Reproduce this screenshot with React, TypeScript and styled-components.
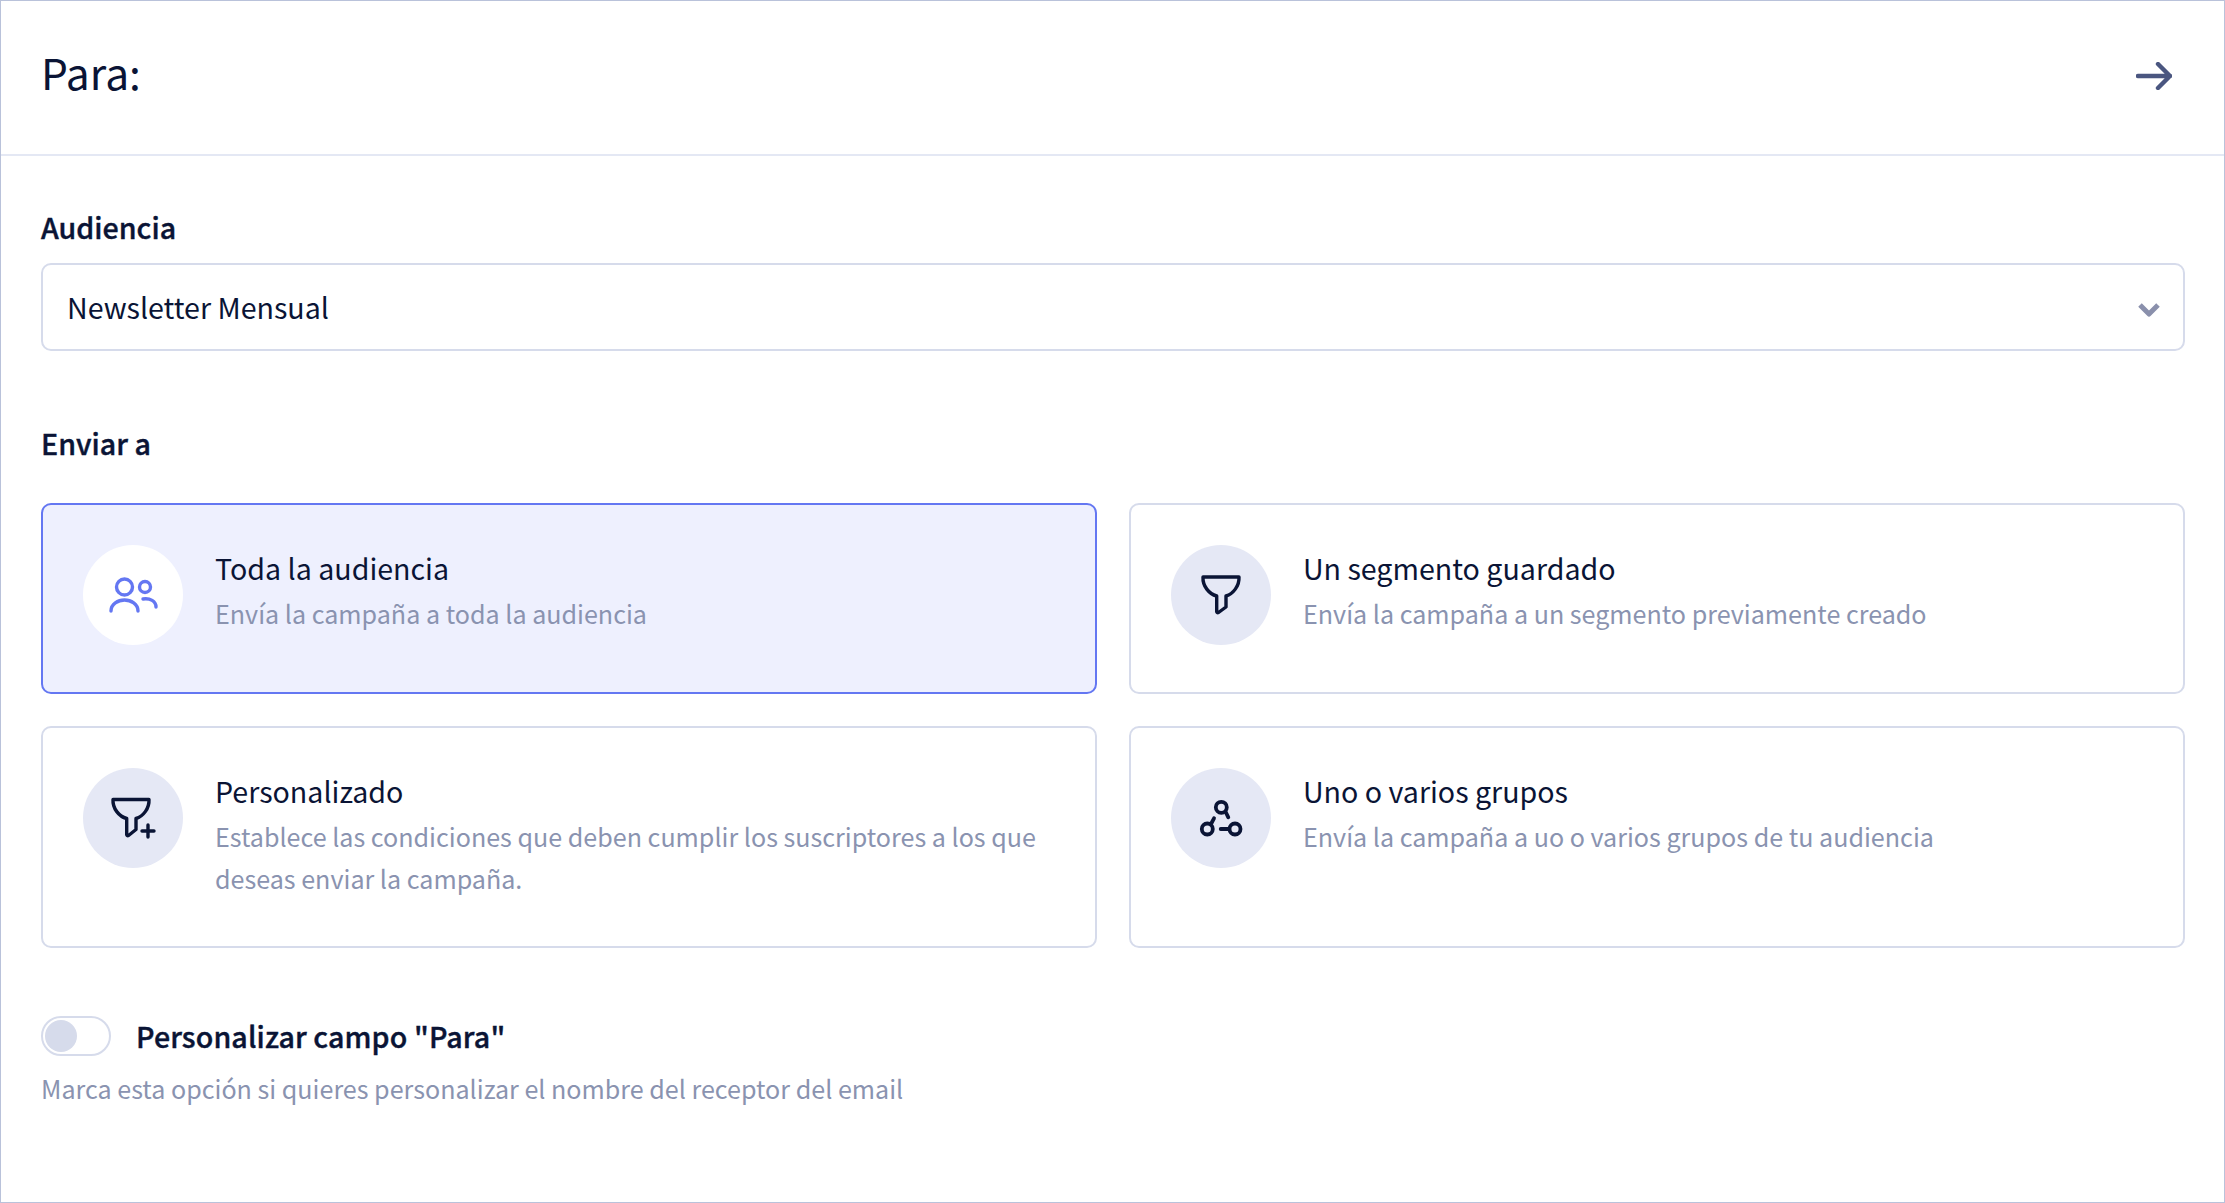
import React from 'react'
import styled, { createGlobalStyle } from 'styled-components'

const COLORS = {
  ink: '#0a1435',
  muted: '#8a93b0',
  line: '#d6dbeb',
  frame: '#b9c2da',
  accent: '#6477f2',
  accentSoft: '#eef0fe',
  iconBg: '#e5e8f5',
}

const GlobalStyle = createGlobalStyle`
  * { box-sizing: border-box; }
  html, body { margin: 0; padding: 0; background: #fff; }
  body { font-family: "Noto Sans CJK SC", "Noto Sans", sans-serif; color: ${COLORS.ink}; }
`

const Frame = styled.div`
  width: 2225px;
  height: 1203px;
  border: 1px solid ${COLORS.frame};
  background: #fff;
  overflow: hidden;
`

const Header = styled.header`
  height: 155px;
  border-bottom: 2px solid #e4e8f4;
  padding: 0 52px 4px 40px;
  display: flex;
  align-items: center;
  justify-content: space-between;
`

const Title = styled.h1`
  margin: 0 0 8px;
  font-size: 42.5px;
  line-height: 60px;
  font-weight: 400;
`

const Body = styled.main`
  padding: 52px 39px 0 40px;
`

const SectionLabel = styled.div<{ $gap: number }>`
  font-size: 28.6px;
  line-height: 38px;
  font-weight: 500;
  -webkit-text-stroke: 0.4px ${COLORS.ink};
  margin-bottom: ${p => p.$gap}px;
`

const Select = styled.div`
  height: 88px;
  border: 2px solid ${COLORS.line};
  border-radius: 10px;
  display: flex;
  align-items: center;
  justify-content: space-between;
  padding: 0 24px 2px;
  font-size: 28.6px;
  margin-bottom: 73px;
`

const CardGrid = styled.div`
  display: grid;
  grid-template-columns: 1056px 1056px;
  grid-template-rows: 191px 222px;
  column-gap: 32px;
  row-gap: 32px;
`

const Card = styled.div<{ $active?: boolean }>`
  display: flex;
  gap: 32px;
  padding: 40px;
  border: 2px solid ${p => (p.$active ? COLORS.accent : COLORS.line)};
  border-radius: 10px;
  background: ${p => (p.$active ? COLORS.accentSoft : '#fff')};
`

const IconCircle = styled.div<{ $active?: boolean }>`
  flex: none;
  width: 100px;
  height: 100px;
  border-radius: 50%;
  background: ${p => (p.$active ? '#fff' : COLORS.iconBg)};
  display: flex;
  align-items: center;
  justify-content: center;
`

const CardTitle = styled.div`
  font-size: 28.6px;
  line-height: 46px;
  margin-bottom: 1px;
`

const CardText = styled.div`
  font-size: 25.1px;
  line-height: 42px;
  color: ${COLORS.muted};
`

const ToggleRow = styled.div`
  display: flex;
  align-items: center;
  gap: 25px;
  margin-top: 68px;
`

const Toggle = styled.div`
  width: 70px;
  height: 40px;
  border: 2px solid ${COLORS.line};
  border-radius: 20px;
  padding: 2px;
  background: #fff;
`

const Knob = styled.div`
  width: 32px;
  height: 32px;
  border-radius: 50%;
  background: ${COLORS.line};
`

const ToggleLabel = styled.div`
  font-size: 28.6px;
  line-height: 38px;
  font-weight: 500;
  letter-spacing: 0.12px;
  -webkit-text-stroke: 0.4px ${COLORS.ink};
`

const Hint = styled.div`
  margin-top: 12px;
  font-size: 25.1px;
  line-height: 40px;
  color: ${COLORS.muted};
`

const Svg = styled.svg<{ $color?: string; $weight?: number }>`
  display: block;
  flex: none;
  fill: none;
  stroke: ${p => p.$color || COLORS.ink};
  stroke-width: ${p => p.$weight || 3.4};
  stroke-linecap: round;
  stroke-linejoin: round;
`

const ArrowIcon = () => (
  <Svg $color="#4a5680" $weight={4.4} width="36" height="28" viewBox="0 0 36 28">
    <path d="M2 14H34M22 2L34 14L22 26" />
  </Svg>
)

const Chevron = styled(Svg)`
  margin: 8px -2px 0 0;
`

const ChevronIcon = () => (
  <Chevron $color="#8a90ac" $weight={5} width="24" height="16" viewBox="0 0 24 16">
    <path d="M3 3L12 12L21 3" strokeLinecap="butt" />
  </Chevron>
)

const UsersIcon = () => (
  <Svg $color={COLORS.accent} width="60" height="60" viewBox="0 0 60 60">
    <circle cx="21.500" cy="22" r="8" />
    <circle cx="42" cy="22" r="5.500" />
    <path d="M8 46C8 39 15 35 21.500 35C28 35 35 39 35 46" />
    <path d="M40 34C47 33 53 36 53 42" />
  </Svg>
)

const FunnelIcon = () => (
  <Svg width="60" height="60" viewBox="0 0 60 60">
    <path d="M12 12H48C48.500 21 42 29 35 31V42L27.500 47.500C26.500 48 25.700 47.500 25.700 46.500V31C18 29 11.500 21 12 12Z" />
  </Svg>
)

const FunnelPlusIcon = () => (
  <Svg width="60" height="60" viewBox="0 0 60 60">
    <path d="M10 11.500H46C46.500 20.500 40 28.500 33 30.500V41.500L25.500 47.500C24.500 48 23.700 47.500 23.700 46.500V30.500C16 28.500 9.500 20.500 10 11.500Z" />
    <path d="M45 37V49M39 43H51" />
  </Svg>
)

const GroupsIcon = () => (
  <Svg width="60" height="60" viewBox="0 0 60 60" $weight={3.8}>
    <circle cx="30.300" cy="19.300" r="5.500" />
    <circle cx="16.300" cy="41" r="5.500" />
    <circle cx="44" cy="41" r="5.500" />
    <path d="M34.700 24L37.300 29.300M23 30.300L20 36M29.700 41H37.300" />
  </Svg>
)

interface Option {
  title: string
  text: string
  icon: React.ReactNode
  active?: boolean
}

const options: Option[] = [
  { title: 'Toda la audiencia', text: 'Envía la campaña a toda la audiencia', icon: <UsersIcon />, active: true },
  { title: 'Un segmento guardado', text: 'Envía la campaña a un segmento previamente creado', icon: <FunnelIcon /> },
  {
    title: 'Personalizado',
    text: 'Establece las condiciones que deben cumplir los suscriptores a los que deseas enviar la campaña.',
    icon: <FunnelPlusIcon />,
  },
  { title: 'Uno o varios grupos', text: 'Envía la campaña a uo o varios grupos de tu audiencia', icon: <GroupsIcon /> },
]

const App: React.FC = () => (
  <Frame>
    <GlobalStyle />
    <Header>
      <Title>Para:</Title>
      <ArrowIcon />
    </Header>
    <Body>
      <SectionLabel $gap={17}>Audiencia</SectionLabel>
      <Select>
        Newsletter Mensual
        <ChevronIcon />
      </Select>
      <SectionLabel $gap={41}>Enviar a</SectionLabel>
      <CardGrid>
        {options.map(o => (
          <Card key={o.title} $active={o.active}>
            <IconCircle $active={o.active}>{o.icon}</IconCircle>
            <div>
              <CardTitle>{o.title}</CardTitle>
              <CardText>{o.text}</CardText>
            </div>
          </Card>
        ))}
      </CardGrid>
      <ToggleRow>
        <Toggle>
          <Knob />
        </Toggle>
        <ToggleLabel>Personalizar campo "Para"</ToggleLabel>
      </ToggleRow>
      <Hint>Marca esta opción si quieres personalizar el nombre del receptor del email</Hint>
    </Body>
  </Frame>
)

export default App
